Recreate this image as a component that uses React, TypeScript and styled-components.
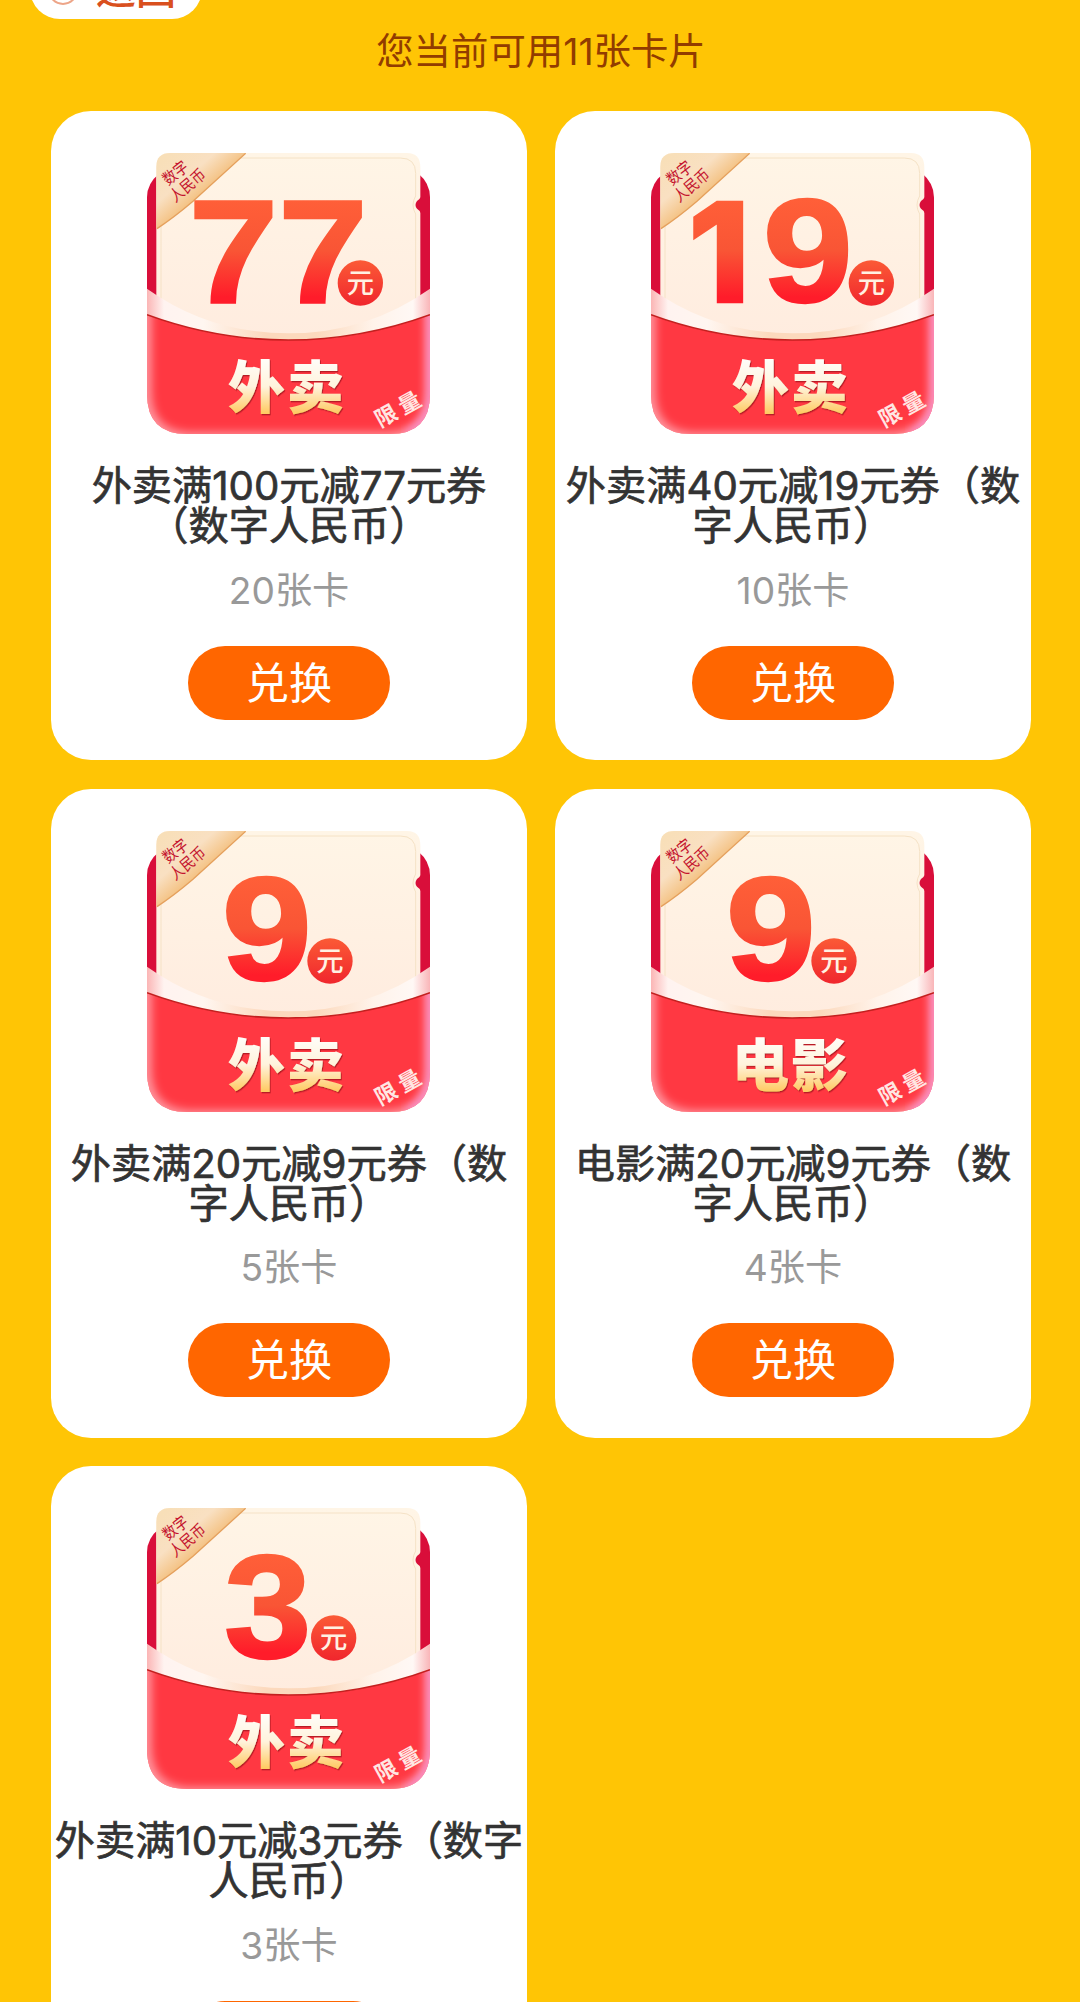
import styled, { createGlobalStyle } from "styled-components";

const GlobalStyle = createGlobalStyle`
  * {
    box-sizing: border-box;
  }
  body {
    margin: 0;
    background: #fff;
    font-family: Inter, "Noto Sans CJK SC", sans-serif;
  }
`;

const Screen = styled.div`
  width: 1080px;
  height: 2002px;
  overflow: hidden;
  background: #ffc505;
`;

const TopBar = styled.div`
  height: 19px;
  padding-left: 30px;
  display: flex;
  align-items: flex-end;
`;

const BackButton = styled.button`
  flex: none;
  width: 172px;
  height: 60px;
  padding: 2px 0 0 18px;
  display: flex;
  align-items: center;
  gap: 18px;
  border: none;
  border-radius: 30px;
  background: #fff;
  color: #d9501e;
  font-family: inherit;
  font-size: 40px;
  font-weight: 500;
  line-height: 58px;
  white-space: nowrap;
`;

const Summary = styled.p`
  margin: 0;
  height: 92px;
  padding: 11px 0 0 2px;
  text-align: center;
  color: #923c00;
  font-size: 37.4px;
  line-height: 44px;
`;

const CardGrid = styled.div`
  display: grid;
  grid-template-columns: 476px 476px;
  grid-auto-rows: 649px;
  gap: 28.5px 28px;
  padding-left: 51px;
`;

const Card = styled.div`
  padding-top: 42px;
  display: flex;
  flex-direction: column;
  align-items: center;
  border-radius: 40px;
  background: #fff;
`;

const CouponArt = styled.svg`
  flex: none;
  display: block;
  width: 283px;
  height: 281px;
  margin-right: 1px;
`;

const Title = styled.h3`
  margin: 32px 0 0;
  color: #333;
  font-size: 40.2px;
  font-weight: 400;
  line-height: 40.4px;
  text-align: center;
  white-space: nowrap;
  -webkit-text-stroke: 0.7px #333;
`;

const Cost = styled.p`
  margin: 22px 0 0;
  color: #999;
  font-size: 37.2px;
  line-height: 44px;
`;

const RedeemButton = styled.button`
  flex: none;
  width: 202px;
  height: 74px;
  margin-top: 33px;
  padding: 0;
  border: none;
  border-radius: 37px;
  background: #ff6600;
  color: #fff;
  font-family: inherit;
  font-size: 43.2px;
  line-height: 74px;
`;

type Digit = { char: string; x: number; width: number };

type CouponItem = {
  id: number;
  digits: Digit[];
  yuanX: number;
  kind: string;
  title: string[];
  cards: number;
};

const coupons: CouponItem[] = [
  {
    id: 1,
    digits: [
      { char: "7", x: 177, width: 270 },
      { char: "7", x: 446, width: 270 },
    ],
    yuanX: 692,
    kind: "外卖",
    title: ["外卖满100元减77元券", "（数字人民币）"],
    cards: 20,
  },
  {
    id: 2,
    digits: [
      { char: "1", x: 164, width: 248 },
      { char: "9", x: 387, width: 272 },
    ],
    yuanX: 713,
    kind: "外卖",
    title: ["外卖满40元减19元券（数", "字人民币）"],
    cards: 10,
  },
  {
    id: 3,
    digits: [{ char: "9", x: 276, width: 272 }],
    yuanX: 601,
    kind: "外卖",
    title: ["外卖满20元减9元券（数", "字人民币）"],
    cards: 5,
  },
  {
    id: 4,
    digits: [{ char: "9", x: 276, width: 272 }],
    yuanX: 601,
    kind: "电影",
    title: ["电影满20元减9元券（数", "字人民币）"],
    cards: 4,
  },
  {
    id: 5,
    digits: [{ char: "3", x: 283, width: 264 }],
    yuanX: 612,
    kind: "外卖",
    title: ["外卖满10元减3元券（数字", "人民币）"],
    cards: 3,
  },
];

const CJK = '"Noto Sans CJK SC", sans-serif';

const Coupon = ({ digits, yuanX, kind }: Pick<CouponItem, "digits" | "yuanX" | "kind">) => (
  <CouponArt viewBox="52 39 849 843">
    <defs>
      <linearGradient id="paper" x1="0" y1="0" x2="0" y2="1">
        <stop offset="0" stopColor="#fff5e6" />
        <stop offset="1" stopColor="#ffecdf" />
      </linearGradient>
      <linearGradient id="digit" gradientUnits="userSpaceOnUse" x1="0" y1="-310" x2="0" y2="0">
        <stop offset="0" stopColor="#ff5f38" />
        <stop offset="0.5" stopColor="#f95535" />
        <stop offset="0.95" stopColor="#ff1c2a" />
      </linearGradient>
      <linearGradient id="coin" x1="0" y1="0" x2="0" y2="1">
        <stop offset="0" stopColor="#fb5a36" />
        <stop offset="1" stopColor="#f0262d" />
      </linearGradient>
      <linearGradient id="gold" gradientUnits="userSpaceOnUse" x1="0" y1="660" x2="0" y2="820">
        <stop offset="0" stopColor="#fffdf8" />
        <stop offset="0.5" stopColor="#fff3dc" />
        <stop offset="1" stopColor="#ffca62" />
      </linearGradient>
      <linearGradient id="fold" gradientUnits="userSpaceOnUse" x1="90" y1="60" x2="210" y2="200">
        <stop offset="0" stopColor="#f8dfb8" />
        <stop offset="0.5" stopColor="#f9e0c2" />
        <stop offset="1" stopColor="#f2b76c" />
      </linearGradient>
      <linearGradient id="band" x1="0" y1="0" x2="1" y2="0">
        <stop offset="0" stopColor="#fbb5b5" />
        <stop offset="0.06" stopColor="#fff3f0" />
        <stop offset="0.2" stopColor="#fff6f0" />
        <stop offset="0.42" stopColor="#fcd9bd" />
        <stop offset="0.6" stopColor="#fcd9bd" />
        <stop offset="0.8" stopColor="#fff3ea" />
        <stop offset="0.94" stopColor="#fff8f5" />
        <stop offset="1" stopColor="#f9b5b8" />
      </linearGradient>
      <clipPath id="pocket">
        <path d="M52 524Q260 600 476 600T901 524V762Q901 882 781 882H172Q52 882 52 762Z" />
      </clipPath>
      <filter id="glow" x="-20%" y="-20%" width="140%" height="140%">
        <feGaussianBlur stdDeviation="15" />
      </filter>
      <filter id="shade">
        <feDropShadow dx="3" dy="4" stdDeviation="2" floodColor="#b81f26" />
      </filter>
    </defs>

    {/* dark backing behind the ticket */}
    <path d="M52 500V172Q52 130 90 100H865Q901 130 901 172V500Z" fill="#d90e3a" />

    {/* ticket */}
    <path
      d="M80 530V80Q80 39 122 39H832Q872 39 872 82V172Q872 177 862 183Q853 195 862 206Q872 212 872 219V530Q700 600 476 600T80 530Z"
      fill="url(#paper)"
    />
    <path
      d="M94 480V54H812Q858 54 858 100V168Q842 195 858 222V480"
      fill="none"
      stroke="#f5e2c6"
      strokeWidth="3"
    />
    <path d="M80 266V80Q80 39 122 39H348L190 184Q130 235 80 266Z" fill="url(#fold)" />
    <path d="M82 266Q130 235 190 184L348 40" fill="none" stroke="#e5a05c" strokeWidth="4" />
    <g fill="#c4142f" fontFamily={CJK} fontSize="44">
      <text transform="translate(115 138) rotate(-38) scale(0.94 1.1)">数字</text>
      <text transform="translate(137 189) rotate(-40) scale(0.94 1.08)">人民币</text>
    </g>

    {digits.map((d, i) => (
      <text
        key={i}
        transform={`translate(${d.x} 487) scale(${d.width / 245} 1)`}
        fill="url(#digit)"
        stroke="url(#digit)"
        strokeWidth="7"
        fontFamily={d.char === "1" ? "Inter, sans-serif" : '"Liberation Sans", sans-serif'}
        fontWeight={d.char === "1" ? 800 : 700}
        fontSize={d.char === "1" ? 414 : 438}
      >
        {d.char}
      </text>
    ))}
    <circle cx={yuanX} cy="429" r="68" fill="url(#coin)" />
    <text x={yuanX} y="459" textAnchor="middle" fill="#fff1e2" fontFamily={CJK} fontSize="82" fontWeight="500">
      元
    </text>

    {/* curved band and the red pocket */}
    <path d="M52 446Q240 580 476 580T901 446V524Q690 600 476 600T52 524Z" fill="url(#band)" />
    <g clipPath="url(#pocket)">
      <rect x="52" y="500" width="849" height="382" fill="#ff3842" />
      <path
        d="M48 400V762Q52 886 172 894H781Q901 886 905 762V400"
        fill="none"
        stroke="#ff9fa8"
        strokeWidth="32"
        filter="url(#glow)"
      />
      <path d="M905 500V760Q905 850 830 884" fill="none" stroke="#f58be0" strokeWidth="18" filter="url(#glow)" />
    </g>
    <path d="M52 524Q260 600 476 600T901 524" fill="none" stroke="#c3201f" strokeWidth="5" />

    <text
      x="294"
      y="803"
      fill="url(#gold)"
      filter="url(#shade)"
      fontFamily={CJK}
      fontSize="172"
      fontWeight="900"
      letterSpacing="5"
    >
      {kind}
    </text>
    <text
      transform="translate(752 864) rotate(-29)"
      fill="#ffe6e3"
      fontFamily={CJK}
      fontSize="66"
      fontWeight="700"
      letterSpacing="14"
    >
      限量
    </text>
  </CouponArt>
);

const App = () => {
  return (
    <>
      <GlobalStyle />
      <Screen>
        <TopBar>
          <BackButton>
            <svg width="30" height="30" viewBox="0 0 30 30" fill="none" stroke="#eda588" strokeWidth="2">
              <circle cx="15" cy="15" r="14" />
              <path d="M17 8L10 15L17 22" />
            </svg>
            返回
          </BackButton>
        </TopBar>
        <Summary>您当前可用11张卡片</Summary>
        <CardGrid>
          {coupons.map((c) => (
            <Card key={c.id}>
              <Coupon digits={c.digits} yuanX={c.yuanX} kind={c.kind} />
              <Title>
                {c.title[0]}
                <br />
                {c.title[1]}
              </Title>
              <Cost>{c.cards}张卡</Cost>
              <RedeemButton>兑换</RedeemButton>
            </Card>
          ))}
        </CardGrid>
      </Screen>
    </>
  );
};

export default App;
